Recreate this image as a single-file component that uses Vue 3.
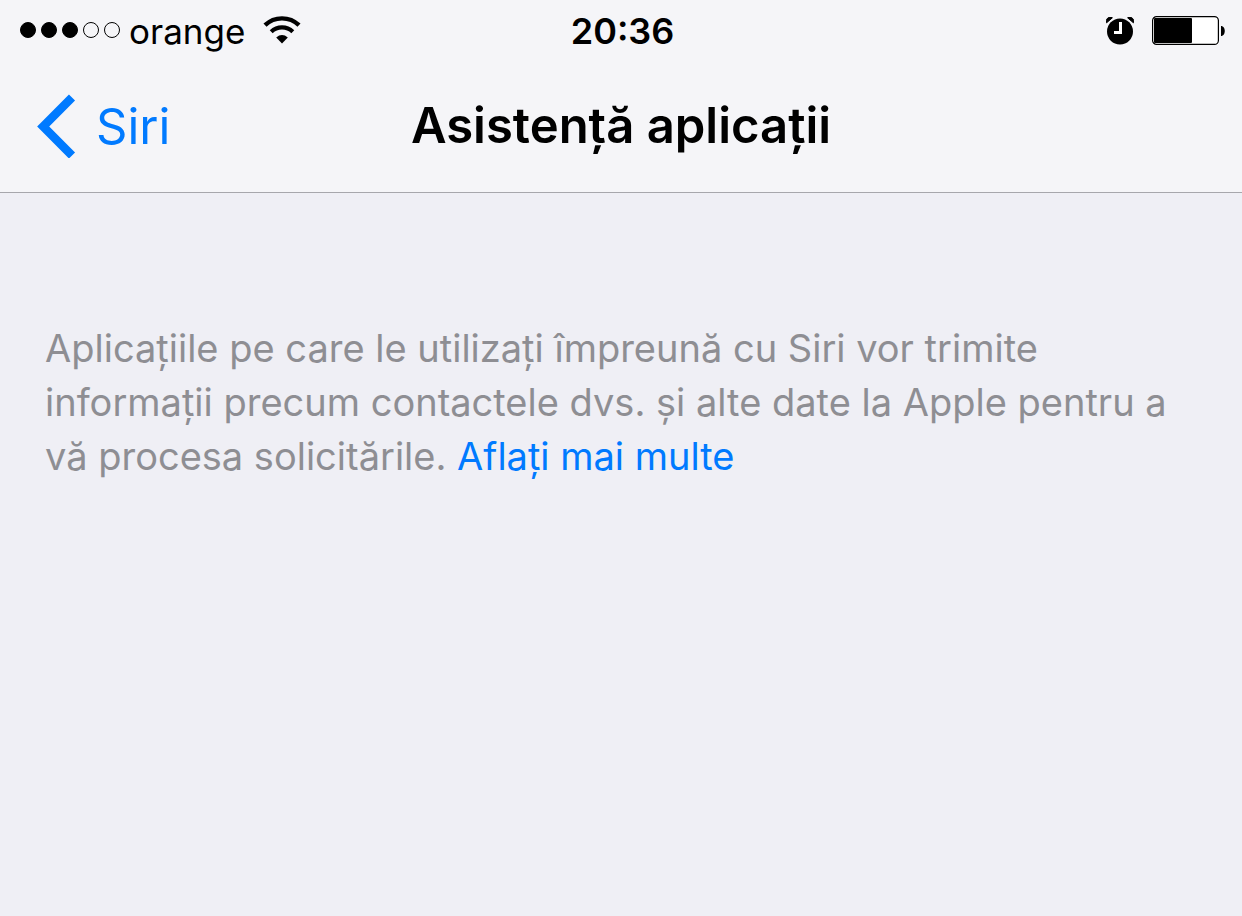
<template>
  <div class="screen">
    <header class="header">
      <div class="status-bar">
        <div class="status-left">
          <div class="signal" role="img" :aria-label="`${signal} / 5`">
            <span
              v-for="n in 5"
              :key="n"
              class="dot"
              :class="{ filled: n <= signal }"
            ></span>
          </div>
          <span class="carrier">orange</span>
          <svg class="wifi" width="38" height="30" viewBox="0 0 38 30" aria-hidden="true">
            <path d="M2 9.2A24.5 24.5 0 0 1 36 9.2" fill="none" stroke="#000" stroke-width="4.4" />
            <path d="M8.2 15.8A15.6 15.6 0 0 1 29.8 15.8" fill="none" stroke="#000" stroke-width="4.2" />
            <path d="M13.2 21.4Q19 16.6 24.8 21.4L19 27.4Z" />
          </svg>
        </div>
        <span class="time">20:36</span>
        <div class="status-right">
          <svg class="alarm" width="28" height="28" viewBox="0 0 28 28" aria-hidden="true">
            <circle cx="14" cy="14.5" r="13" />
            <path d="M0.6 5.8A4 4 0 0 1 6.4 0.8Z" stroke="#000" stroke-width="1" />
            <path d="M27.4 5.8A4 4 0 0 0 21.6 0.8Z" stroke="#000" stroke-width="1" />
            <path d="M14.5 5V15.5H8" fill="none" stroke="#fff" stroke-width="3" />
          </svg>
          <svg class="battery" width="73" height="30" viewBox="0 0 73 30" aria-hidden="true">
            <rect x="0.6" y="0.6" width="65.8" height="27.8" rx="4" fill="#fff" stroke="#000" stroke-width="1.2" />
            <rect x="2" y="2" :width="batteryWidth" height="25" rx="1" />
            <path d="M69 10C74 10 74 20 69 20Z" />
          </svg>
        </div>
      </div>
      <nav class="nav-bar">
        <button class="back" type="button">
          <svg class="chevron" width="40" height="64" viewBox="0 0 40 64" aria-hidden="true">
            <path d="M36 3.5L7.2 32.5L36 61.5" fill="none" stroke="#007aff" stroke-width="8.6" />
          </svg>
          <span>Siri</span>
        </button>
        <h1 class="title">Asistență aplicații</h1>
      </nav>
    </header>
    <main class="content">
      <p class="footnote">
        Aplicațiile pe care le utilizați împreună cu Siri vor trimite
        informații precum contactele dvs. și alte date la Apple pentru a
        vă procesa solicitările. <a href="#" @click.prevent>Aflați mai multe</a>
      </p>
    </main>
  </div>
</template>

<script setup>
import { computed, ref } from 'vue'

const signal = ref(3)
const battery = ref(60)

const batteryWidth = computed(() => Math.round(battery.value * 0.63))
</script>

<style>
body {
  margin: 0;
  background: #efeff5;
}
</style>

<style scoped>
.screen {
  min-height: 100vh;
  background: #efeff5;
  font-family: Inter, "Liberation Sans", sans-serif;
  color: #000;
}
.header {
  background: #f5f5f8;
  border-bottom: 1px solid #a7a7ac;
}
.status-bar {
  display: grid;
  grid-template-columns: 1fr auto 1fr;
  align-items: center;
  height: 62px;
  padding: 0 17px 0 20px;
  font-size: 35px;
  line-height: 62px;
}
.status-left,
.status-right {
  display: flex;
  align-items: center;
}
.status-right {
  justify-content: flex-end;
  gap: 18px;
}
.signal {
  display: flex;
  gap: 5px;
  margin-right: 9px;
  padding-bottom: 2px;
}
.dot {
  box-sizing: border-box;
  width: 16px;
  height: 16px;
  border: 1px solid #000;
  border-radius: 50%;
}
.dot.filled { background: #000; }
.wifi { margin-left: 18px; }
.time {
  font-size: 36px;
  font-weight: 600;
}
.nav-bar {
  display: grid;
  grid-template-columns: 1fr auto 1fr;
  align-items: center;
  height: 128px;
  padding: 0 36px 2px;
}
.back {
  display: flex;
  align-items: center;
  justify-self: start;
  gap: 20px;
  padding: 0;
  border: none;
  background: none;
  font: inherit;
  font-size: 49px;
  color: #007aff;
  cursor: pointer;
}
.title {
  margin: 0;
  font-size: 49px;
  font-weight: 600;
  line-height: 60px;
}
.content { padding: 128px 45px; }
.footnote {
  margin: 0;
  font-size: 38px;
  line-height: 54px;
  color: #8e8e93;
}
.footnote a {
  color: #007aff;
  text-decoration: none;
}
</style>
